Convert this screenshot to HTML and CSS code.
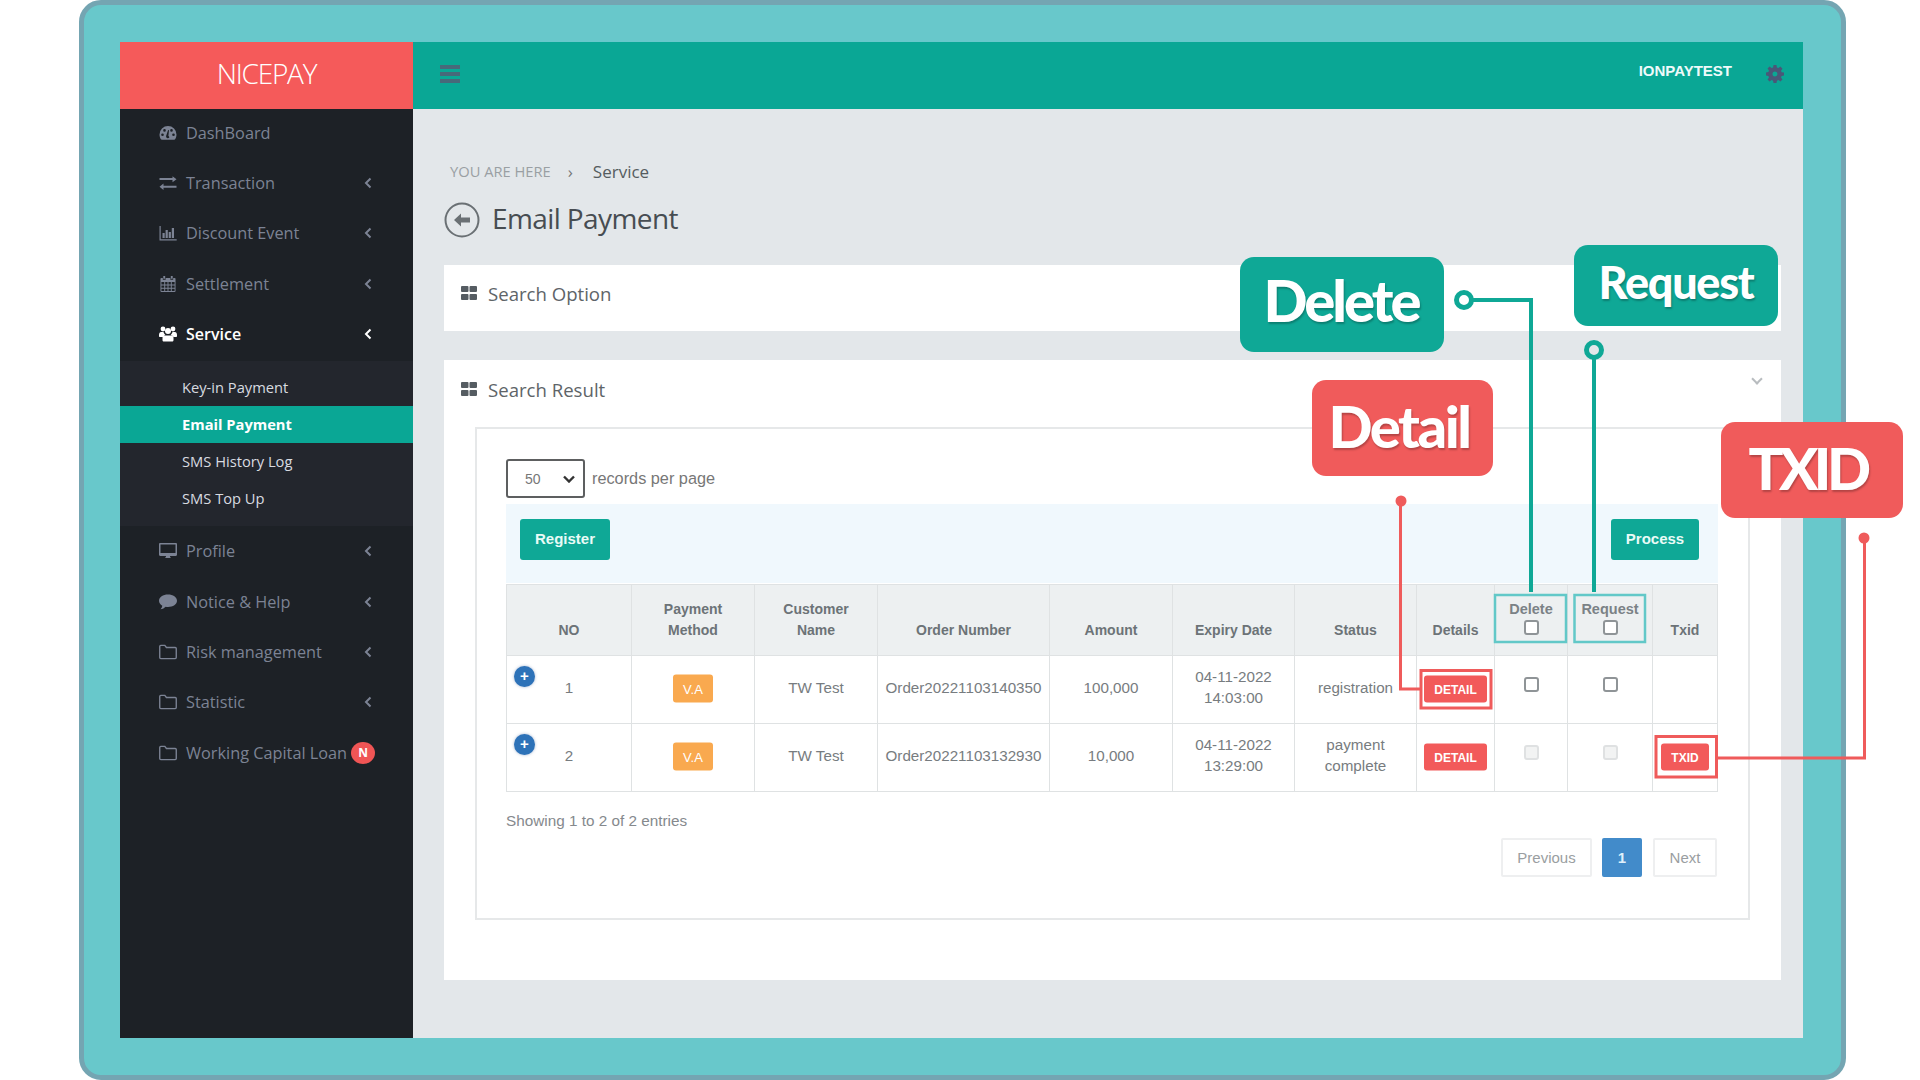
FILE: index.html
```html
<!DOCTYPE html>
<html lang="en">
<head>
    <meta charset="UTF-8">
    <title>Email Payment</title>
    <link rel="stylesheet" href="styles.css">
</head>
<body>
    <svg class="icon-defs" xmlns="http://www.w3.org/2000/svg">
        <symbol id="i-gauge" viewBox="0 0 18 16"><path fill-rule="evenodd" d="M9 1a8.500 8.500 0 0 0-8.500 8.500c0 1.800.5 3.400 1.400 4.800.2.300.5.500.9.500h12.400c.4 0 .7-.2.900-.5.900-1.400 1.400-3 1.400-4.800A8.500 8.500 0 0 0 9 1zM3.500 11a1.300 1.300 0 1 1 0-2.600 1.300 1.300 0 0 1 0 2.600zm2-4.300a1.300 1.300 0 1 1 0-2.600 1.300 1.300 0 0 1 0 2.600zm4.800 5.800a1.800 1.800 0 0 1-3.200-1.500l2-6 .9.300-.6 5.800c.6.300 1 .900.900 1.400zM12.500 6.700a1.300 1.300 0 1 1 0-2.600 1.300 1.300 0 0 1 0 2.600zm2 4.300a1.300 1.300 0 1 1 0-2.600 1.300 1.300 0 0 1 0 2.600z"/></symbol>
        <symbol id="i-exchange" viewBox="0 0 18 14"><path d="M4.500 7.500v2.200h13v2h-13v2.200L.5 10.700zM13.500 0.200l4 3-4 3V4H.5V2h13z"/></symbol>
        <symbol id="i-bars" viewBox="0 0 18 16"><path d="M.5 1h1.200v13.300h16v1.200H.5zM3.500 8h2.200v5H3.500zM6.600 5h2.200v8H6.600zM9.700 7h2.200v6H9.700zM12.800 3h2.200v10h-2.200z"/></symbol>
        <symbol id="i-calendar" viewBox="0 0 16 17"><path fill-rule="evenodd" d="M3 0h2v3H3zM11 0h2v3h-2zM1 2h1.500v2h3V2h5v2h3V2H15a1 1 0 0 1 1 1v13a1 1 0 0 1-1 1H1a1 1 0 0 1-1-1V3a1 1 0 0 1 1-1zM1 6.500V9h3V6.500zm4 0V9h2.500V6.500zm3.500 0V9H11V6.500zm3.500 0V9h3V6.500zM1 10v2.500h3V10zm4 0v2.500h2.500V10zm3.500 0v2.500H11V10zm3.500 0v2.500h3V10zM1 13.500V16h3v-2.500zm4 0V16h2.500v-2.500zm3.500 0V16H11v-2.500zm3.500 0V16h3v-2.500z"/></symbol>
        <symbol id="i-users" viewBox="0 0 18 16"><circle cx="4" cy="3" r="2.400"/><circle cx="14" cy="3" r="2.400"/><circle cx="9" cy="5" r="3"/><path d="M0 9c0-2 1-3 2-3h2.500c.2 1.200 1 2.200 1.800 2.700-1.300.4-2.200 1.300-2.600 2.300H1c-.6 0-1-.4-1-1zM18 9c0-2-1-3-2-3h-2.500c-.2 1.200-1 2.200-1.800 2.700 1.300.4 2.200 1.300 2.600 2.300H17c.6 0 1-.4 1-1zM5 9.500h8c1 0 1.500 1 1.500 2.500v2c0 1-.6 1.500-1.500 1.500H5c-.9 0-1.500-.5-1.500-1.500v-2C3.500 10.500 4 9.500 5 9.500z"/></symbol>
        <symbol id="i-desktop" viewBox="0 0 18 16"><path fill-rule="evenodd" d="M1.200 0h15.600C17.500 0 18 .5 18 1.200v10.600c0 .7-.5 1.200-1.200 1.200H11c0 1 .5 1.500 1 2H6c.5-.5 1-1 1-2H1.200C.5 13 0 12.500 0 11.800V1.200C0 .5.500 0 1.200 0zM1.500 1.500V10h15V1.500z"/></symbol>
        <symbol id="i-comment" viewBox="0 0 18 15"><path d="M9 0c5 0 9 2.700 9 6.200s-4 6.200-9 6.200c-.8 0-1.600-.1-2.300-.2C5.500 13.400 3.500 14.500 1.500 14.800c.9-1 1.600-2.100 1.800-3.600C1.300 10.100 0 8.300 0 6.200 0 2.700 4 0 9 0z"/></symbol>
        <symbol id="i-folder" viewBox="0 0 17 14"><path fill="none" stroke="currentColor" stroke-width="1.300" d="M1.700.7h3.800l1.500 2h8.300c.6 0 1 .4 1 1v8.600c0 .6-.4 1-1 1H1.700c-.6 0-1-.4-1-1V1.700c0-.6.400-1 1-1z"/></symbol>
        <symbol id="i-chevron" viewBox="0 0 8 12"><path fill="none" stroke="currentColor" stroke-width="2" d="M6.500 1.500L2 6l4.500 4.500"/></symbol>
        <symbol id="i-grid" viewBox="0 0 16 14"><path d="M0 1a1 1 0 0 1 1-1h5.500a1 1 0 0 1 1 1v4a1 1 0 0 1-1 1H1a1 1 0 0 1-1-1zM8.500 1a1 1 0 0 1 1-1H15a1 1 0 0 1 1 1v4a1 1 0 0 1-1 1H9.500a1 1 0 0 1-1-1zM0 9a1 1 0 0 1 1-1h5.500a1 1 0 0 1 1 1v4a1 1 0 0 1-1 1H1a1 1 0 0 1-1-1zM8.500 9a1 1 0 0 1 1-1H15a1 1 0 0 1 1 1v4a1 1 0 0 1-1 1H9.500a1 1 0 0 1-1-1z"/></symbol>
    </svg>

    <div class="frame">
        <div class="app">
            <aside class="sidebar">
                <div class="logo">NICEPAY</div>
                <ul class="menu">
                    <li class="menu-item"><svg class="menu-icon"><use href="#i-gauge"/></svg><span>DashBoard</span></li>
                    <li class="menu-item"><svg class="menu-icon"><use href="#i-exchange"/></svg><span>Transaction</span><svg class="menu-arrow"><use href="#i-chevron"/></svg></li>
                    <li class="menu-item"><svg class="menu-icon"><use href="#i-bars"/></svg><span>Discount Event</span><svg class="menu-arrow"><use href="#i-chevron"/></svg></li>
                    <li class="menu-item"><svg class="menu-icon"><use href="#i-calendar"/></svg><span>Settlement</span><svg class="menu-arrow"><use href="#i-chevron"/></svg></li>
                    <li class="menu-item open"><svg class="menu-icon"><use href="#i-users"/></svg><span>Service</span><svg class="menu-arrow"><use href="#i-chevron"/></svg></li>
                    <li>
                        <ul class="submenu">
                            <li>Key-in Payment</li>
                            <li class="active">Email Payment</li>
                            <li>SMS History Log</li>
                            <li>SMS Top Up</li>
                        </ul>
                    </li>
                    <li class="menu-item"><svg class="menu-icon"><use href="#i-desktop"/></svg><span>Profile</span><svg class="menu-arrow"><use href="#i-chevron"/></svg></li>
                    <li class="menu-item"><svg class="menu-icon"><use href="#i-comment"/></svg><span>Notice &amp; Help</span><svg class="menu-arrow"><use href="#i-chevron"/></svg></li>
                    <li class="menu-item"><svg class="menu-icon"><use href="#i-folder"/></svg><span>Risk management</span><svg class="menu-arrow"><use href="#i-chevron"/></svg></li>
                    <li class="menu-item"><svg class="menu-icon"><use href="#i-folder"/></svg><span>Statistic</span><svg class="menu-arrow"><use href="#i-chevron"/></svg></li>
                    <li class="menu-item"><svg class="menu-icon"><use href="#i-folder"/></svg><span>Working Capital Loan</span><em class="new-badge">N</em></li>
                </ul>
            </aside>

            <div class="main">
                <header class="topbar">
                    <div class="hamburger"><i></i><i></i><i></i></div>
                    <div class="user">IONPAYTEST</div>
                    <svg class="gear" viewBox="0 0 18 18"><path fill-rule="evenodd" d="M7.500 0h3l.4 2.500 1.500.6 2-1.500 2.100 2.100-1.500 2 .6 1.500 2.400.4v3l-2.400.4-.6 1.500 1.500 2-2.100 2.100-2-1.500-1.500.6-.4 2.400h-3l-.4-2.400-1.500-.6-2 1.500-2.100-2.100 1.500-2-.6-1.500L0 10.500v-3l2.400-.4.6-1.500-1.500-2 2.100-2.100 2 1.500 1.500-.6zM9 6.500a2.500 2.500 0 1 0 0 5 2.500 2.500 0 0 0 0-5z"/></svg>
                </header>

                <div class="content">
                    <div class="breadcrumb"><span class="crumb-label">YOU ARE HERE</span><span class="crumb-sep">&rsaquo;</span><span class="crumb-page">Service</span></div>
                    <div class="title-row">
                        <svg class="back" viewBox="0 0 36 36"><circle cx="18" cy="18" r="16.500" fill="none" stroke="currentColor" stroke-width="2"/><path d="M10 18l7-6.500v4h9v5h-9v4z"/></svg>
                        <h1>Email Payment</h1>
                    </div>

                    <section class="panel panel-option">
                        <div class="panel-head"><svg class="grid-icon"><use href="#i-grid"/></svg>Search Option</div>
                    </section>

                    <section class="panel panel-result">
                        <div class="panel-head"><svg class="grid-icon"><use href="#i-grid"/></svg>Search Result<span class="collapse"></span></div>
                        <div class="result-box">
                            <div class="length-row">
                                <div class="length-select"><span>50</span><svg viewBox="0 0 12 8"><path fill="none" stroke="currentColor" stroke-width="2.400" d="M1 1.500l5 5 5-5"/></svg></div>
                                <span class="length-label">records per page</span>
                            </div>
                            <div class="toolbar">
                                <button class="btn btn-register">Register</button>
                                <button class="btn btn-process">Process</button>
                            </div>
                            <table class="result-table">
                                <colgroup>
                                    <col class="c-no"><col class="c-method"><col class="c-name"><col class="c-order"><col class="c-amount"><col class="c-expiry"><col class="c-status"><col class="c-details"><col class="c-delete"><col class="c-request"><col class="c-txid">
                                </colgroup>
                                <thead>
                                    <tr>
                                        <th>NO</th>
                                        <th>Payment<br>Method</th>
                                        <th>Customer<br>Name</th>
                                        <th>Order Number</th>
                                        <th>Amount</th>
                                        <th>Expiry Date</th>
                                        <th>Status</th>
                                        <th>Details</th>
                                        <th class="th-check">Delete<br><span class="check"></span></th>
                                        <th class="th-check">Request<br><span class="check"></span></th>
                                        <th>Txid</th>
                                    </tr>
                                </thead>
                                <tbody>
                                    <tr>
                                        <td class="td-no"><span class="expand">+</span>1</td>
                                        <td><span class="va">V.A</span></td>
                                        <td>TW Test</td>
                                        <td>Order20221103140350</td>
                                        <td>100,000</td>
                                        <td>04-11-2022<br>14:03:00</td>
                                        <td>registration</td>
                                        <td><span class="red-btn detail">DETAIL</span></td>
                                        <td class="td-check"><span class="check"></span></td>
                                        <td class="td-check"><span class="check"></span></td>
                                        <td></td>
                                    </tr>
                                    <tr>
                                        <td class="td-no"><span class="expand">+</span>2</td>
                                        <td><span class="va">V.A</span></td>
                                        <td>TW Test</td>
                                        <td>Order20221103132930</td>
                                        <td>10,000</td>
                                        <td>04-11-2022<br>13:29:00</td>
                                        <td>payment<br>complete</td>
                                        <td><span class="red-btn detail">DETAIL</span></td>
                                        <td class="td-check"><span class="check disabled"></span></td>
                                        <td class="td-check"><span class="check disabled"></span></td>
                                        <td><span class="red-btn txid">TXID</span></td>
                                    </tr>
                                </tbody>
                            </table>
                            <div class="table-info">Showing 1 to 2 of 2 entries</div>
                            <div class="pager">
                                <span class="page-btn prev">Previous</span>
                                <span class="page-btn current">1</span>
                                <span class="page-btn next">Next</span>
                            </div>
                        </div>
                    </section>
                </div>
            </div>
        </div>
    </div>

    <!-- annotation layer drawn over the screenshot -->
    <svg class="annotations" viewBox="0 0 1920 1080">
        <g fill="none" stroke="#0fa896">
            <circle cx="1464" cy="300" r="7.500" stroke-width="5"/>
            <path d="M1471 300H1531V592" stroke-width="4"/>
            <circle cx="1594" cy="350" r="7.500" stroke-width="5"/>
            <path d="M1594 358V592" stroke-width="4"/>
        </g>
        <g fill="none" stroke="#62c8c8" stroke-width="2.500">
            <rect x="1495" y="595" width="71" height="47"/>
            <rect x="1574.500" y="595" width="70.500" height="47"/>
        </g>
        <g fill="none" stroke="#ef5b5b" stroke-width="3">
            <path d="M1400.500 501V689H1420"/>
            <rect x="1421" y="670.500" width="70" height="37.500"/>
            <path d="M1864.500 538V758H1717"/>
            <rect x="1656" y="736.500" width="60.500" height="40.500"/>
        </g>
        <circle cx="1401" cy="501" r="5.500" fill="#ef5b5b"/>
        <circle cx="1864" cy="538" r="5.500" fill="#ef5b5b"/>
    </svg>
    <div class="callout teal c-delete-tag">Delete</div>
    <div class="callout teal c-request-tag">Request</div>
    <div class="callout red c-detail-tag">Detail</div>
    <div class="callout red c-txid-tag">TXID</div>
</body>
</html>
```

FILE: styles.css
```css
* {
    box-sizing: border-box;
}

body {
    margin: 0;
    width: 1920px;
    height: 1080px;
    padding-left: 79px;
    background: #fff;
    font-family: "Open Sans", sans-serif;
    position: relative;
    overflow: hidden;
}

.icon-defs {
    display: none;
}

ul {
    list-style: none;
    margin: 0;
    padding: 0;
}

.frame {
    width: 1767px;
    height: 1080px;
    padding: 37px 0 0 36px;
    background: #68c8cb;
    border: 5px solid #74a5b2;
    border-radius: 22px;
}

.app {
    display: flex;
    width: 1681px;
    height: 996px;
}

/* sidebar */
.sidebar {
    width: 293px;
    flex-shrink: 0;
    background: #1d2126;
}

.logo {
    height: 67px;
    background: #f55a5a;
    color: #fff;
    font-size: 28px;
    font-weight: 300;
    letter-spacing: -1.2px;
    line-height: 63px;
    text-align: center;
}

.menu-item {
    display: flex;
    align-items: center;
    height: 50.4px;
    padding-left: 39px;
    color: #7c8394;
    font-size: 16.3px;
}

.menu-item:nth-child(-n+5) {
    padding-bottom: 3px;
}

.menu-icon {
    width: 18px;
    height: 16px;
    margin-right: 9px;
    fill: currentColor;
}

.menu-arrow {
    width: 8px;
    height: 12px;
    margin-left: auto;
    margin-right: 41px;
}

.menu-item.open {
    color: #fff;
    font-weight: 600;
    font-size: 16px;
}

.submenu {
    background: #23262d;
    padding: 8px 0 9px;
}

.submenu li {
    height: 37px;
    line-height: 36px;
    padding-left: 62px;
    color: #d8dbe0;
    font-size: 14.7px;
}

.submenu li.active {
    background: #0aa795;
    color: #fff;
    font-weight: 700;
}

.new-badge {
    width: 24px;
    height: 22px;
    margin-left: 4px;
    border-radius: 50%;
    background: #f05555;
    color: #fff;
    font-size: 12px;
    font-style: normal;
    font-weight: 700;
    line-height: 22px;
    text-align: center;
}

/* top bar */
.main {
    flex: 1;
    display: flex;
    flex-direction: column;
    background: #e3e7ea;
}

.topbar {
    display: flex;
    align-items: center;
    height: 67px;
    padding: 0 19px 0 27px;
    background: #0aa795;
}

.hamburger {
    width: 20px;
    margin-bottom: 3px;
}

.hamburger i {
    display: block;
    height: 4px;
    margin-bottom: 3px;
    background: #47697a;
}

.hamburger i:last-child {
    margin-bottom: 0;
}

.user {
    margin-left: auto;
    margin-bottom: 10px;
    color: #eefafa;
    font-family: "Liberation Sans", sans-serif;
    font-size: 15px;
    font-weight: 700;
}

.gear {
    width: 18px;
    height: 18px;
    margin-left: 34px;
    margin-bottom: 4px;
    fill: #4a5778;
}

/* content */
.content {
    flex: 1;
    padding: 52px 22px 0 31px;
}

.breadcrumb {
    display: flex;
    align-items: center;
    height: 20px;
    padding-left: 6px;
}

.crumb-label {
    color: #9a9fa3;
    font-size: 14.7px;
}

.crumb-sep {
    margin: 0 20px 0 17px;
    color: #777;
    font-size: 17px;
}

.crumb-page {
    color: #555c60;
    font-size: 17px;
}

.title-row {
    display: flex;
    align-items: center;
    height: 40px;
    margin-top: 19px;
}

.back {
    width: 36px;
    height: 36px;
    color: #6a7074;
    fill: #6a7074;
}

h1 {
    margin: 0 0 5px 12px;
    color: #474d52;
    font-size: 28px;
    font-weight: 500;
    letter-spacing: -0.6px;
}

.panel {
    background: #fff;
}

.panel-option {
    height: 66px;
    margin-top: 25px;
}

.panel-result {
    height: 620px;
    margin-top: 29px;
}

.panel-head {
    display: flex;
    align-items: center;
    height: 56px;
    padding-left: 17px;
    color: #5e6468;
    font-size: 18.6px;
}

.panel-result .panel-head {
    height: 58px;
    margin-bottom: 9px;
}

.grid-icon {
    width: 16px;
    height: 14px;
    margin-right: 11px;
    fill: #555c62;
}

.collapse {
    width: 8px;
    height: 8px;
    margin-left: auto;
    margin-right: 20px;
    margin-bottom: 20px;
    border-right: 2px solid #b8bcbf;
    border-bottom: 2px solid #b8bcbf;
    transform: rotate(45deg);
}

.result-box {
    height: 493px;
    margin: 0 31px;
    padding: 30px 30px 0 29px;
    border: 2px solid #e6e8e9;
    font-family: "Liberation Sans", sans-serif;
}

.length-row {
    display: flex;
    align-items: center;
    height: 39px;
}

.length-select {
    display: flex;
    align-items: center;
    justify-content: space-between;
    width: 79px;
    height: 39px;
    padding: 0 8px 0 17px;
    border: 2px solid #5d5f60;
    border-radius: 3px;
    color: #777;
    font-size: 14px;
}

.length-select svg {
    width: 12px;
    height: 8px;
    color: #333;
}

.length-label {
    margin-left: 7px;
    color: #777;
    font-size: 16.3px;
}

.toolbar {
    display: flex;
    justify-content: space-between;
    height: 79px;
    margin-top: 6px;
    padding: 15px 19px 0 14px;
    background: #f0f8fd;
}

.btn {
    height: 41px;
    padding-bottom: 4px;
    border: none;
    border-radius: 3px;
    background: #0fa896;
    color: #e9fbf7;
    font-family: "Liberation Sans", sans-serif;
    font-size: 15px;
    font-weight: 700;
}

.btn-register {
    width: 90px;
}

.btn-process {
    width: 88px;
}

.result-table {
    width: 1211px;
    margin-top: 1px;
    border-collapse: collapse;
    table-layout: fixed;
    color: #777c80;
    font-size: 15.2px;
    text-align: center;
}

.c-no { width: 125px; }
.c-method { width: 123px; }
.c-name { width: 123px; }
.c-order { width: 172px; }
.c-amount { width: 123px; }
.c-expiry { width: 122px; }
.c-status { width: 122px; }
.c-details { width: 78px; }
.c-delete { width: 73px; }
.c-request { width: 85px; }
.c-txid { width: 65px; }

.result-table th,
.result-table td {
    border: 1px solid #dfe2e3;
    padding: 0;
    line-height: 21px;
}

.result-table th {
    height: 71px;
    padding-bottom: 14px;
    background: #edf0f1;
    color: #6c7377;
    font-size: 14px;
    font-weight: 700;
    vertical-align: bottom;
}

.result-table td {
    height: 68px;
    padding-bottom: 5px;
}

.result-table .th-check {
    font-size: 14.5px;
    color: #7b8286;
}

.th-check .check {
    transform: translateY(-4px);
}

.td-no {
    position: relative;
}

.expand {
    position: absolute;
    left: 7px;
    top: 10px;
    width: 21px;
    height: 21px;
    border-radius: 50%;
    background: #2d72b8;
    box-shadow: 0 0 3px rgba(60, 100, 160, 0.5);
    color: #fff;
    font-size: 15px;
    font-weight: 700;
    line-height: 19px;
}

.va {
    display: inline-block;
    width: 40px;
    height: 28px;
    border-radius: 3px;
    background: #f9a94f;
    color: #fff;
    font-size: 13px;
    line-height: 30px;
    transform: translateY(1.5px);
}

.red-btn {
    display: inline-block;
    height: 27px;
    border-radius: 3px;
    background: #f25a5a;
    color: #fff;
    font-size: 12px;
    font-weight: 700;
    line-height: 28px;
    vertical-align: middle;
    transform: translateY(1.5px);
}

.detail {
    width: 63px;
}

.txid {
    width: 48px;
}

.check {
    display: inline-block;
    width: 15px;
    height: 15px;
    border: 2px solid #8f9497;
    border-radius: 3px;
    background: #fff;
    vertical-align: middle;
}

.td-check .check {
    margin-bottom: 6px;
}

.check.disabled {
    border-color: #dfe1e2;
    background: #f2f3f3;
}

.table-info {
    height: 20px;
    margin-top: 19px;
    color: #85898d;
    font-size: 15.3px;
    line-height: 20px;
}

.pager {
    display: flex;
    justify-content: flex-end;
    margin-top: 7px;
    margin-right: 1px;
}

.page-btn {
    height: 39px;
    border: 2px solid #eeeff0;
    border-radius: 2px;
    background: #fff;
    color: #9a9ea1;
    font-size: 15px;
    line-height: 35px;
    text-align: center;
}

.prev {
    width: 91px;
}

.current {
    width: 40px;
    margin: 0 11px 0 10px;
    border-color: #428bca;
    background: #428bca;
    color: #dff0fb;
    font-weight: 700;
}

.next {
    width: 64px;
}

/* annotation layer */
.annotations {
    position: absolute;
    left: 0;
    top: 0;
    width: 1920px;
    height: 1080px;
    pointer-events: none;
}

.callout {
    position: absolute;
    border-radius: 14px;
    color: #fff;
    font-family: Lato, sans-serif;
    font-weight: 900;
    text-align: center;
    text-shadow: 1px 2px 2px rgba(0, 0, 0, 0.25);
}

.teal {
    background: #0fa896;
}

.red {
    background: #f05b5b;
}

.c-delete-tag {
    left: 1240px;
    top: 257px;
    width: 204px;
    height: 95px;
    padding-right: 2px;
    font-size: 58px;
    letter-spacing: -3px;
    line-height: 86px;
}

.c-request-tag {
    left: 1574px;
    top: 245px;
    width: 204px;
    height: 81px;
    font-size: 45px;
    letter-spacing: -1.3px;
    line-height: 74px;
}

.c-detail-tag {
    left: 1312px;
    top: 380px;
    width: 181px;
    height: 96px;
    padding-right: 7px;
    font-size: 58px;
    letter-spacing: -2.500px;
    line-height: 92px;
}

.c-txid-tag {
    left: 1721px;
    top: 422px;
    width: 182px;
    height: 96px;
    padding-right: 9px;
    font-size: 58px;
    letter-spacing: -4.500px;
    line-height: 92px;
}
```
